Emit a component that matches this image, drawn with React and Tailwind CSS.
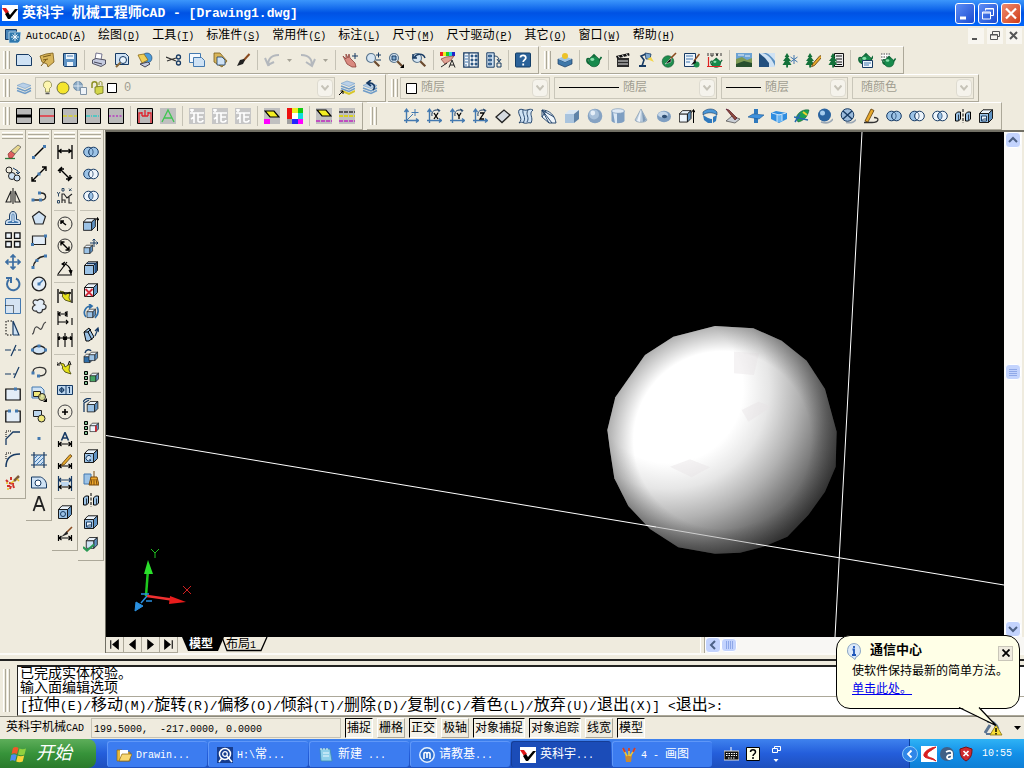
import React, { useState } from 'react';

const NAVY = '#173a63';
const STEEL = '#4379b0';
const PALE = '#cfe2f4';
const INK = '#1a1a1a';

// ---- shared icon shapes ----
const lineSample = (color, dash, width = 1.5) => (
  <>
    <path d="M.5 .5h15v15H.5z" fill="#b9b9b9" stroke="#000" />
    <path d="M1 8h14" stroke={color} strokeWidth={width} strokeDasharray={dash} />
  </>
);

const rings = (left, right, mid) => (
  <>
    <circle cx="5.5" cy="8" r="4.8" fill={left} stroke={NAVY} />
    <circle cx="10.5" cy="8" r="4.8" fill={right} stroke={NAVY} />
    <path d="M8 4a4.8 4.8 0 0 1 0 8a4.8 4.8 0 0 1 0-8z" fill={mid} stroke={NAVY} strokeWidth=".7" />
  </>
);

const cube = (front = PALE, edge = INK) => (
  <>
    <path d="M1.5 5.5h9v9h-9z" fill={front} stroke={edge} />
    <path d="M1.5 5.5L5 1.8h9.5l-4 3.7z" fill="#eaf3fb" stroke={edge} />
    <path d="M10.5 14.5l4-4V1.8l-4 3.7z" fill="#5f93c4" stroke={edge} />
  </>
);

const smallCube = (x, y, front = PALE) => (
  <g transform={`translate(${x} ${y}) scale(.66)`}>{cube(front)}</g>
);

const teapot = (
  <>
    <path d="M12 10l3.500-5M3.500 7C0 5 0 11 4 12" stroke="#0f6a39" strokeWidth="1.700" />
    <ellipse cx="8" cy="9.500" rx="5.600" ry="5.300" fill="#178a4c" stroke="#0b4f2b" strokeWidth=".6" />
    <path d="M5 4.800l3-3 3 3z" fill="#0f6a39" />
    <ellipse cx="6.300" cy="7.500" rx="2" ry="1.400" fill="#8be0ae" />
  </>
);

const tree = (
  <path d="M5 1l2.500 4H6l3 4H7l2.500 4H6v2.500H4.200V13H.5L3 9H1l3-4H2.600z" fill="#14713a" />
);

const ucs = (letter) => (
  <>
    <path d="M3.500 15V2M1 12.500h14M1.500 4l2-2.800 2 2.800M13 10.500l2.500 2-2.500 2" stroke={STEEL} strokeWidth="1.400" />
    {letter === 'X' && <path d="M8 5l4 6M12 5l-4 6" stroke="#000" strokeWidth="1.300" />}
    {letter === 'Y' && <path d="M8 5l2 3 2-3M10 8v3" stroke="#000" strokeWidth="1.300" />}
    {letter === 'Z' && <path d="M8 5h4l-4 6h4" stroke="#000" strokeWidth="1.300" />}
    {letter && <path d="M6 8c-1-5 3-7 7-5.500M11 1l3 1.500-2 2" stroke={NAVY} />}
    {!letter && <path d="M4 12l6-6M12 1v7M8.500 4.500h7" stroke={STEEL} />}
  </>
);

const layers = (
  <>
    <path d="M1 5.500L7 3l8 2.500L9 8.500z" fill="#b9d0e8" stroke="#6f9cc8" strokeWidth=".6" />
    <path d="M1 8l8 3 6-3M1 10.500l8 3 6-3" stroke="#6f9cc8" strokeWidth="1.500" />
  </>
);

const magnifier = (
  <>
    <circle cx="6" cy="6" r="4.500" fill="#d5e5f2" stroke="#5b7790" strokeWidth="1.200" />
    <path d="M9.300 9.300l5 5" stroke="#6b4a2e" strokeWidth="2.200" />
  </>
);

const pencil = <path d="M4.500 10L12 1.500l2 1.500-7.500 8.500-3 1.200z" fill="#e7a92c" stroke="#5c3b0a" strokeWidth=".8" />;
const dimArrow = <path d="M1.500 9v6M14.500 9v6M2 12h12M4.500 10L2 12l2.500 2M11.500 10L14 12l-2.500 2" stroke="#000" strokeWidth="1.200" />;
const bolt = <path d="M3 3l4 1 1 3 5-3-1 6 2 4-6-2-3-4 1-1z" fill="#e6e21a" stroke="#3c3c00" strokeWidth=".8" />;
const textStyle = (
  <>
    <path d="M0 0h16v16H0z" fill="#c6c6c6" />
    <path d="M1 2h4M3 1v3M1 5h14M5 5v10M9 5v8c0 1.500 5 1.500 5-1M9 9h5M2 11l3-2" stroke="#fff" strokeWidth="1.600" />
  </>
);
const swatches = (
  <path d="M1.500 1.500h3v3h-3zM1.500 6.500h3v3h-3zM1.500 11.500h3v3h-3z" fill="#7fbf8f" stroke="#000" />
);

const icons = {
  // standard
  New: <path d="M.5 2.500h12l3 3v8H.5z" fill={PALE} stroke={NAVY} />,
  Open: (
    <>
      <path d="M1 4l6-2 7-1 1 9-6 5-1-3-5-2z" fill="#d9b65b" stroke="#7a5a17" strokeWidth=".8" />
      <path d="M4 5l8-2M4 8l5-1M2 14l5-6" stroke="#7a5a17" />
    </>
  ),
  Save: (
    <>
      <path d="M1.500 1.500h13v13h-12l-1-1z" fill="#5f93c4" stroke={NAVY} />
      <path d="M4 2h8v5H4zM5 10h6v4H5z" fill="#eef5fb" />
      <path d="M5 4h6" stroke={STEEL} />
    </>
  ),
  Plot: (
    <>
      <path d="M5 1l6 1-1 6H4z" fill="#fff" stroke="#557" strokeWidth=".8" />
      <path d="M1.500 8L5 6.500l9.500 1.500v4L10 14.500l-8.500-3z" fill="#c5cbe0" stroke="#445" strokeWidth=".9" />
      <path d="M3 10l8 2" stroke="#445" />
    </>
  ),
  'Plot preview': (
    <>
      <path d="M1.500 1.500h10l3 3v8h-13z" fill={PALE} stroke={NAVY} />
      <circle cx="9" cy="8" r="3.500" fill="#e9f3fb" stroke={NAVY} />
      <path d="M6.500 10.500L2 15" stroke="#8a6a3a" strokeWidth="2" />
    </>
  ),
  Publish: (
    <>
      <circle cx="10" cy="6" r="5" fill="#4d9ddb" stroke={NAVY} strokeWidth=".6" />
      <path d="M1 3l6-1 4 6-6 3z" fill="#f0cf58" stroke="#8a6a17" strokeWidth=".8" />
      <path d="M3 12l8-2 2 2-5 3z" fill="#c5cbe0" stroke="#445" />
    </>
  ),
  Cut: (
    <>
      <path d="M0 5l10 4M1 9l9-3" stroke="#333" strokeWidth="1.300" />
      <circle cx="12.500" cy="5" r="2" stroke={NAVY} strokeWidth="1.300" />
      <circle cx="12.500" cy="11" r="2" stroke={NAVY} strokeWidth="1.300" />
    </>
  ),
  Copy: (
    <>
      <path d="M.5 1.500h11v9H.5z" fill="#f3f8fd" stroke={STEEL} />
      <path d="M4.500 5.500h8l3 3v6h-11z" fill={PALE} stroke={STEEL} />
    </>
  ),
  Paste: (
    <>
      <path d="M2 1h6l7 8-5 6-8-5z" fill="#d9b65b" stroke="#7a5a17" strokeWidth=".8" />
      <path d="M5 5h5l3 3v5H5z" fill={PALE} stroke={NAVY} strokeWidth=".8" />
    </>
  ),
  'Match properties': (
    <>
      <path d="M14.500 2L8 9" stroke="#8a4a1e" strokeWidth="2" />
      <path d="M9 7l-4 1-3 6 6-2 2-4z" fill="#222" />
    </>
  ),
  Undo: <path d="M5 14C3 9 6 3 15 3M1 6l3 7 6-3" stroke="#b4b8bd" strokeWidth="2" />,
  Redo: <path d="M11 14C13 9 10 3 1 3M15 7l-3 7-6-4" stroke="#b4b8bd" strokeWidth="2" />,
  Pan: (
    <>
      <path d="M1 4l3 3V2l2 4 1-4 1 4 5 5 1 4h-4l-5-3z" fill="#d98a80" stroke="#8c4038" strokeWidth=".8" />
      <path d="M13 1v6M10 4h6" stroke={NAVY} />
    </>
  ),
  'Zoom realtime': <>{magnifier}<path d="M11 3h5M13.500 .5v5M11 8h5" stroke={NAVY} /></>,
  'Zoom window': <>{magnifier}<path d="M4 4h4v4H4z" stroke={NAVY} fill="#7fa8cc" /><path d="M16 12v4h-4z" fill="#000" /></>,
  'Zoom previous': <>{magnifier}<path d="M3 6C6 1 12 1 14 6M2 2v4h4" stroke={NAVY} strokeWidth="1.500" /></>,
  Properties: (
    <>
      <path d="M0 0h3v4H0z" fill="#e22" /><path d="M3 0h3v4H3z" fill="#ee2" /><path d="M6 0h3v4H6z" fill="#2c2" />
      <path d="M9 0h3v4H9z" fill="#2cd" /><path d="M12 0h3v4h-3z" fill="#22c" />
      <path d="M1 7l5-2 8-1-3 4-6 4z" fill="#e0a294" stroke="#8c4038" strokeWidth=".7" />
      <path d="M1 15l6-4M9 15.500L12 8l3 7.500M10 13h4" stroke="#222" />
    </>
  ),
  'Design center': (
    <>
      <path d="M.8 .8h14.400v14.400H.8z" fill="#f3f8fd" stroke={NAVY} strokeWidth="1.300" />
      <path d="M6 1v14" stroke={NAVY} />
      <path d="M2 4h3M2 7h3M2 10h3M2 13h2" stroke={STEEL} />
      <path d="M8 3h2v2H8zM12 3h2v2h-2zM8 7h2v2H8zM12 7h2v2h-2zM8 11h2v2H8zM12 11h2v2h-2z" fill={STEEL} stroke={NAVY} strokeWidth=".6" />
    </>
  ),
  'Tool palettes': (
    <>
      <path d="M.8 .8h7.400v14.400H.8z" fill={PALE} stroke={NAVY} />
      <path d="M2.500 3h3v2h-3zM2.500 7h3v2h-3zM2.500 11h3v2h-3z" fill={STEEL} stroke={NAVY} strokeWidth=".6" />
      <path d="M8 4c4 0 5 2 5 5M11 7l2 3 2-3M11 11h4v4h-4z" stroke={NAVY} />
    </>
  ),
  Help: (
    <>
      <rect x=".5" y="1" width="15" height="14" rx="1" fill="#2b6299" stroke="#123d66" />
      <path d="M5.500 5.500C5.500 2.500 11 2.500 10.800 6c0 1.800-2.600 2-2.600 4M8.200 11.500v2" stroke="#fff" strokeWidth="1.800" />
    </>
  ),
  // render
  Hide: (
    <>
      <path d="M1 7l7 3 7-3v5l-7 3-7-3z" fill="#3f77a8" stroke={NAVY} strokeWidth=".7" />
      <path d="M1 7l6-3 8 3-7 3z" fill="#9cc3e6" />
      <circle cx="8" cy="4" r="3" fill="#ecc229" />
    </>
  ),
  Render: teapot,
  Scenes: (
    <>
      <path d="M2 6h12v9H2z" fill="#2b2b2b" />
      <path d="M1 4l13-3 .6 2.500L2 6.500z" fill="#111" />
      <path d="M3 4.500l2 1M7 3.500l2 1M11 2.500l2 1M3 9h10M3 12h10" stroke="#e8e8e8" />
    </>
  ),
  Lights: (
    <>
      <path d="M4 14l2-6-3-4 5-2" stroke={NAVY} strokeWidth="1.600" />
      <path d="M7 1l6 1-1 5H8z" fill="#7ca7cf" stroke={NAVY} strokeWidth=".8" />
      <path d="M9 7l4-2 3 5z" fill="#f3d64a" />
      <path d="M1 14h7" stroke={NAVY} strokeWidth="2" />
    </>
  ),
  Materials: (
    <>
      <circle cx="7" cy="9.500" r="5.800" fill="#1e8e4d" stroke="#0b4f2b" strokeWidth=".6" />
      <path d="M15 1L9 7" stroke="#8a4a1e" strokeWidth="1.600" />
      <path d="M10 6l-6 6 6-2z" fill="#111" stroke="#eee" strokeWidth=".5" />
    </>
  ),
  'Materials library': (
    <>
      <path d="M.5 1.500h11v13H.5z" fill="#eef5fb" stroke={NAVY} />
      <path d="M2 4h7M2 7h7M2 10h4" stroke={STEEL} />
      <circle cx="12.500" cy="12.500" r="3" fill="#1e8e4d" />
      <path d="M15.500 2L10 9" stroke="#8a4a1e" strokeWidth="1.500" />
      <path d="M11 8l-4 5 5-2z" fill="#111" />
    </>
  ),
  Mapping: (
    <>
      <g transform="translate(3 4) scale(.78)">{teapot}</g>
      <path d="M1.500 15V5M0 14.500h15" stroke="#d22" strokeWidth="1.200" />
      <path d="M1 1v3M4 1v3h2V1M9 1l1 3 1-3M14 1v3" stroke="#222" strokeWidth=".9" />
    </>
  ),
  Background: (
    <>
      <path d="M0 1h16v7H0z" fill="#6da3d4" />
      <path d="M0 7l6-2 5 3 5-2v9H0z" fill="#7d9a55" />
      <path d="M0 12l8-3 8 2v4H0z" fill="#284f2e" />
      <path d="M2 3h6M9 4h5" stroke="#e8f0f8" />
    </>
  ),
  Fog: (
    <>
      <path d="M0 1h16v14H0z" fill="#cfe2f4" />
      <path d="M0 1l6 5 4 5v4H0z" fill="#23507f" />
      <path d="M3 1c6 1 10 6 13 13V9C13 5 10 2 7 1z" fill="#5a8fc0" />
    </>
  ),
  'New landscape': <>{tree}<path d="M12 3v9M8.500 5l7 5M15.500 5l-7 5" stroke={STEEL} /></>,
  'Edit landscape': <>{tree}<g transform="translate(3 2)">{pencil}</g></>,
  'Landscape library': (
    <>
      <path d="M6.500 1.500h9v13h-9z" fill="#eee" stroke="#111" />
      <path d="M8 4h6M8 7h6M8 10h6M8 12.500h6" stroke="#111" />
      {tree}
    </>
  ),
  'Render preferences': (
    <>
      <g transform="translate(1 -1)">{teapot}</g>
      <path d="M5.500 8.500h10v7h-10z" fill="#eef5fb" stroke={NAVY} />
      <path d="M7 11h7M7 13h5" stroke={STEEL} />
    </>
  ),
  Statistics: (
    <>
      <path d="M1 1.500h9v8H1z" fill="#fff" />
      <path d="M1 2h9M1 5h9M1 8h9" stroke="#444" strokeDasharray="1.500 1" />
      <g transform="translate(2 2) scale(.88)">{teapot}</g>
    </>
  ),
  // layers
  'Layer manager': layers,
  'Make object layer current': (
    <>
      <g transform="translate(1 -2)">{layers}</g>
      <path d="M3 11l7 3 6-3" stroke="#d8c62a" strokeWidth="2" />
      <path d="M0 15l4-4M1.500 11H4v3" stroke="#000" />
    </>
  ),
  'Layer previous': <>{layers}<path d="M11 10c3-3 1-8-5-7M9 0L5 3l4 3" stroke={NAVY} strokeWidth="1.600" /></>,
  // line types
  'Bold line': lineSample('#000', undefined, 3),
  'Thin line': lineSample('#e8303c'),
  'Hidden line': lineSample('#d6cf2e', '4 1.5'),
  'Centre line': lineSample('#35c9c5', '4 1 1 1'),
  'Phantom line': lineSample('#b83cc0', '2 1.5'),
  'Surface mark': (
    <>
      <path d="M.5 .5h15v15H.5z" fill="#b9b9b9" stroke="#000" />
      <path d="M2 15V5h3v3V4M8 8V2M11 8V4v1h3v10M5 8h6" stroke="#e0202a" strokeWidth="1.300" />
    </>
  ),
  'Text tool': <><path d="M0 0h16v16H0z" fill="#c0c0c0" /><path d="M2 14L8 2l6 12M4 10h8" stroke="#3fc552" strokeWidth="1.300" /></>,
  'Text style 1': textStyle,
  'Text style 2': textStyle,
  'Text style 3': textStyle,
  'Fill colour': (
    <>
      <path d="M0 0h16v16H0z" fill="#c0c0c0" />
      <path d="M1 3h9l5 6H6z" fill="#f2ee22" stroke="#000" strokeWidth="1.200" />
      <path d="M0 11h6v5H0z" fill="#f0f" />
    </>
  ),
  Palette: (
    <>
      <path d="M0 0h5v5H0z" fill="#e11" /><path d="M5 0h6v5H5z" fill="#ee2" /><path d="M11 0h5v5h-5z" fill="#1c1" />
      <path d="M0 5h5v6H0z" fill="#e11" /><path d="M5 5h6v6H5z" fill="#fff" /><path d="M11 5h5v6h-5z" fill="#1dd" />
      <path d="M0 11h5v5H0z" fill="#a0a0a0" /><path d="M5 11h6v5H5z" fill="#22f" /><path d="M11 11h5v5h-5z" fill="#f0f" />
    </>
  ),
  'Fill line': (
    <>
      <path d="M0 0h16v16H0z" fill="#c0c0c0" />
      <path d="M1 2h9l5 6H6z" fill="#f2ee22" stroke="#000" strokeWidth="1.200" />
      <path d="M0 13h16" stroke="#c02ac0" strokeWidth="1.500" strokeDasharray="4 1" />
    </>
  ),
  'Line list': (
    <>
      <path d="M0 0h16v16H0z" fill="#c0c0c0" />
      <path d="M0 4h16" stroke="#333" strokeWidth="1.500" strokeDasharray="4 1" />
      <path d="M0 8h16" stroke="#d8d022" strokeWidth="2" strokeDasharray="4 1" />
      <path d="M0 13h16" stroke="#c02ac0" strokeWidth="1.500" strokeDasharray="4 1" />
    </>
  ),
  // ucs and solids
  'UCS origin': ucs(),
  'UCS X': ucs('X'),
  'UCS Y': ucs('Y'),
  'UCS Z': ucs('Z'),
  '3D face': <path d="M1 9l8-7 6 5-8 7.500z" fill="#d6dbe0" stroke="#222" strokeWidth="1.300" />,
  'Ruled surface': <path d="M1 2c3-2 5 1 8 0s4-1 6 0c-5 4 1 7-2 13-3-1-5 1-7 0s-3-1-5 0C6 10-1 7 1 2zM5 2c-1 5 4 7 0 13M10 2c-3 5 2 7-1 12" fill={PALE} stroke={NAVY} strokeWidth=".9" />,
  'Edge surface': <path d="M1 2c8 0 13 6 14 13H8L1 9zM1 2l7 13M1 2l10 13M1 2l12 7M1 9L5 3" fill="#eef5fb" stroke={NAVY} strokeWidth=".9" />,
  Box: (
    <>
      <path d="M1 6h9v9H1z" fill="#a9c4de" /><path d="M1 6l4-4h10l-5 4z" fill="#dbe8f4" /><path d="M10 15l5-4V2l-5 4z" fill="#5f83a8" />
    </>
  ),
  Sphere: <><circle cx="8" cy="8" r="7.300" fill="#86a3c3" /><circle cx="7" cy="6.500" r="5" fill="#a9c1da" /><circle cx="5.800" cy="5" r="2.400" fill="#e6eff8" /></>,
  Cylinder: (
    <>
      <path d="M1.500 3v10c2 3 11 3 13 0V3z" fill="#7f9fc2" /><path d="M3 4h4v11H5z" fill="#dbe8f4" />
      <ellipse cx="8" cy="3" rx="6.500" ry="2.300" fill="#dfeaf5" stroke="#6f8fb1" strokeWidth=".6" />
    </>
  ),
  Cone: <><path d="M8 1l6 11c-1 3-11 3-12 0z" fill="#b9cbdc" stroke="#7a92aa" strokeWidth=".6" /><path d="M8 1l-1 13-3-1z" fill="#eef4fa" /><path d="M9 3l4 9-3 2z" fill="#7f9ab6" /></>,
  Torus: <><ellipse cx="8" cy="8.500" rx="7" ry="5.800" fill="#7f9fc2" /><ellipse cx="7" cy="6.500" rx="5" ry="3" fill="#c5d7e9" /><ellipse cx="8.500" cy="8.500" rx="2.600" ry="1.800" fill="#2f4f73" /></>,
  Extrude: <><g transform="translate(-1 1) scale(.9)">{cube('#eef5fb')}</g><path d="M14.500 15V2M12.500 4.500l2-3 1.500 3" stroke="#000" /></>,
  Revolve: <><path d="M1 4c4-4 11-4 14 0v3c-4-3-10-3-14 0z" fill="#4a97d8" stroke={NAVY} strokeWidth=".6" /><path d="M1 7l5 3v5l-4-3zM6 10l4 1v4H6zM11 9l4-2-1 6-3 2z" fill="#2f79bd" /><circle cx="9" cy="9" r="1.800" fill="#e8f2fb" /></>,
  Slice: <><path d="M1 13l6-5 8 3-5 4z" fill="#c9ced4" stroke="#444" strokeWidth=".7" /><path d="M1 1l3 1 8 8-2 2z" fill="#8a4a3a" stroke="#402" strokeWidth=".6" /></>,
  Section: <><path d="M6 1h4v5H6zM6 10h4v5H6z" fill="#2f79bd" /><path d="M0 9l5-3 11 1-5 4z" fill="#3f92de" stroke="#1a5590" strokeWidth=".6" /></>,
  Interfere: <><path d="M0 5l5-2 11 2v6l-8 4-8-4z" fill="#2f8de0" /><path d="M6 6h5v8H6z" fill="#67b4f2" /><path d="M1 5l7 2 7-2M6 7v7M11 7v6" stroke="#cfe6fa" /></>,
  'Setup view': <><path d="M2 10c2-7 9-9 13-8-1 6-5 11-11 12z" fill="#1fa052" stroke="#0b4f2b" strokeWidth=".5" /><path d="M0 9l14 3M1 14l5-8" stroke="#2468b0" strokeWidth="1.500" /><path d="M9 4l4 3" stroke="#f2d22e" strokeWidth="2" /></>,
  'Shaded view': <><path d="M4 14c6 2 10 0 12-3" stroke="#9aa7b4" strokeWidth="1.500" /><circle cx="7.500" cy="7" r="6.500" fill="#2a63a0" /><circle cx="5.500" cy="5" r="2.500" fill="#a5cbed" /></>,
  'Mesh view': <><path d="M6 14.500c5 1 8 0 10-3" stroke="#9aa7b4" strokeWidth="1.500" /><circle cx="7.500" cy="7" r="6.300" fill="#9bbbdc" stroke={NAVY} /><path d="M3 3l9 8M12 3l-9 8" stroke={NAVY} strokeWidth="1.400" /></>,
  Sketch: <><path d="M1 14.500h8c7 0 8-5 2-5" stroke="#333" strokeWidth="1.300" /><path d="M2 13L8 1l3 1.500L5 14z" fill="#e7a92c" stroke="#5c3b0a" strokeWidth=".8" /></>,
  Union: rings('#9cc3e6', '#9cc3e6', '#9cc3e6'),
  Subtract: rings('#9cc3e6', '#eef5fb', '#eef5fb'),
  Intersect: rings('#eef5fb', '#eef5fb', '#9cc3e6'),
  Separate: (
    <>
      <path d="M.5 6l2-2h3v7l-2 2h-3zM10.500 6l2-2h3v7l-2 2h-3z" fill="#9cc3e6" stroke="#000" />
      <path d="M3.500 6.500v6M13.500 6.500v6" stroke="#000" strokeWidth=".7" />
      <path d="M8 1v14" stroke="#000" strokeDasharray="3 1.500" />
    </>
  ),
  Shell: <>{cube('#9cc3e6')}<path d="M3.500 8h5v5h-5z" fill="#eef5fb" stroke={NAVY} /><path d="M3.500 13l2-2h3" stroke={NAVY} /></>,
  // modify
  Erase: <><path d="M0 14.500h10" stroke="#2b7a3a" strokeWidth="1.300" /><path d="M3 10l3-3 4 3-3 4H4z" fill="#e06060" stroke="#7a2222" strokeWidth=".6" /><path d="M6 7l7-6 3 2-6 7z" fill="#e8d890" stroke="#555" strokeWidth=".7" /></>,
  'Copy object': <><circle cx="4" cy="4" r="3" stroke="#222" /><circle cx="7" cy="10" r="3.500" fill={PALE} stroke="#222" /><circle cx="12" cy="12" r="3" fill={PALE} stroke="#222" /><path d="M8 2l5 3v3M11 6l2 2 2-2" stroke={NAVY} /></>,
  Mirror: <path d="M6 3v11H1zM10 3v11h5zM8 0v16" stroke="#222" strokeWidth="1.100" />,
  Offset: <><path d="M.5 14.500h15v-2c0-3-3-3-4-3V6c0-6-7-6-7 0v3.500c-1 0-4 0-4 3z" fill={PALE} stroke={NAVY} /><path d="M3 12.500h10c0-1-3-1-4-1V6c0-3-2-3-2 0v5.500c-1 0-4 0-4 1z" fill="#fff" stroke={STEEL} /></>,
  Array: <path d="M.8 .8h5.500v5.500H.8zM9.500 .8H15v5.500H9.500zM.8 9.500h5.500V15H.8zM9.500 9.500H15V15H9.500z" fill="#eef5fb" stroke="#111" strokeWidth="1.300" />,
  Move: <path d="M8 1v14M1 8h14M5.500 3.500L8 1l2.500 2.500M5.500 12.500L8 15l2.500-2.500M3.500 5.500L1 8l2.500 2.500M12.500 5.500L15 8l-2.500 2.500" stroke="#3c6ea3" strokeWidth="1.700" />,
  Rotate: <path d="M4 3.500a6.200 6.200 0 1 0 7-1M1 2l5 0v5" stroke="#3c6ea3" strokeWidth="2" />,
  Scale: <><path d="M.5 .5h15v15H.5z" fill="#d5e3f2" stroke={STEEL} /><path d="M.5 7.500h8v8" stroke="#000" strokeDasharray="1 1" /></>,
  Stretch: <><path d="M8 1v14M8 1l6 14H8" fill={PALE} stroke={NAVY} strokeWidth="1.200" /><path d="M7 1H1v14h6" stroke="#000" strokeDasharray="1.5 1.5" /></>,
  Trim: <path d="M0 8h6M11 3L6 14M9 8h2M13 8h3" stroke={NAVY} strokeWidth="1.200" />,
  Extend: <path d="M0 10h6M8 10h3M14 3L9 14" stroke={NAVY} strokeWidth="1.200" />,
  'Break at point': <><path d="M.8 3h14.400v11H.8z" fill="#e3edf7" stroke="#000" strokeWidth="1.200" /><path d="M9 1.500h3v3H9z" fill={STEEL} /></>,
  Break: <><path d="M4 3H.8v11h14.400V3H12" fill="#e3edf7" stroke="#000" strokeWidth="1.200" /><path d="M3 1.500h3v3H3zM10 1.500h3v3h-3z" fill={STEEL} /></>,
  Chamfer: <><path d="M1 15V9l7-7h7" stroke={NAVY} strokeWidth="1.300" /><path d="M1 7V1h6" stroke="#000" strokeDasharray="1 1" /></>,
  Fillet: <><path d="M1 15C1 6 6 2 15 2" stroke={NAVY} strokeWidth="1.500" /><path d="M1 7V1h6" stroke="#000" strokeDasharray="1 1" /></>,
  Explode: <><path d="M9 7l5-5" stroke="#7a5a3a" strokeWidth="2.500" /><path d="M1 6l2 2M6 3v3M2 12h3M5 15l1-3M9 14l-1-3M4 9l5 1" stroke="#d0302a" strokeWidth="2" /><path d="M6 9l3-2M2 15h2M12 5l2 2M1 9h2" stroke="#e8c020" strokeWidth="1.500" /></>,
  // draw
  Line: <><path d="M3 13L13 3" stroke="#000" strokeWidth="1.400" /><path d="M1 12h3v3H1zM12 1h3v3h-3z" fill={STEEL} /></>,
  'Construction line': <><path d="M1 15L15 1M1 11v4h4M11 1h4v4" stroke="#000" strokeWidth="1.400" /><path d="M6.500 6.500h3v3h-3z" fill={STEEL} /></>,
  Polyline: <><path d="M2 12h9c5 0 5-7-1-7" stroke="#222" strokeWidth="1.300" /><path d="M.5 10.500h3v3h-3zM8 10.500h3v3H8zM7 3.500h3v3H7z" fill={STEEL} /></>,
  Polygon: <path d="M8 1.500l6.500 5-2.500 7.500H4L1.500 6.500z" fill={PALE} stroke="#222" strokeWidth="1.200" />,
  Rectangle: <><path d="M1.500 4h13v8.500h-13z" fill="#e3edf7" stroke="#222" strokeWidth="1.200" /><path d="M0 11h3v3H0zM13 2.500h3v3h-3z" fill={STEEL} /></>,
  Arc: <><path d="M2 14C3 7 7 3 14 2" stroke="#222" strokeWidth="1.300" /><path d="M.5 12h3v3h-3zM4.500 5h3v3h-3zM13 .5h3v3h-3z" fill={STEEL} /></>,
  Circle: <><circle cx="8" cy="8" r="6.800" fill="#e3edf7" stroke="#222" strokeWidth="1.300" /><path d="M8 8l4-4" stroke={STEEL} strokeWidth="1.500" /><path d="M6.500 6.500h3v3h-3z" fill={STEEL} /></>,
  'Revision cloud': <path d="M4 7C0 5 3 0 6.500 2.500 9-.5 15 2 12.500 6c4 1 3 6-1 5.500 0 4-5 4.500-6 1.500-4 1-6-4-1.500-6z" fill="#e3edf7" stroke="#333" strokeWidth="1.200" />,
  Spline: <path d="M1 14C4 14 2 8 5 7s4 5 6 1 1-5 4-6" stroke="#444" strokeWidth="1.200" />,
  Ellipse: <><ellipse cx="8" cy="8" rx="6.300" ry="4" fill={PALE} stroke="#222" strokeWidth="1.300" /><path d="M0 6.500h3v3H0zM13 6.500h3v3h-3zM6.500 2.500h3v3h-3z" fill={STEEL} /></>,
  'Ellipse arc': <><path d="M2 8C2 2 15 2 15 7c0 4-4 5-7 5" stroke="#333" strokeWidth="1.300" /><path d="M.5 7.500h3v3h-3zM6 10.500h3v3H6z" fill={STEEL} /></>,
  'Insert block': <><path d="M1 1h9l3 3v8H1z" fill={PALE} stroke={STEEL} /><path d="M2.500 5.500h7v5h-7z" fill="#f0e87a" stroke="#222" /><circle cx="11" cy="11" r="3.500" fill="#f0e87a" fillOpacity=".7" stroke="#222" /><path d="M16 12v4h-4z" fill="#000" /></>,
  'Make block': <><path d="M2.500 2.500h8v6h-8z" fill="#bcd6ee" stroke="#222" /><circle cx="10.500" cy="10.500" r="3.500" fill="#f0e87a" stroke="#222" /></>,
  Point: <path d="M6.500 7h3v3h-3z" fill={STEEL} />,
  Hatch: <><path d="M3 3h10v10H3z" fill={PALE} /><path d="M3 0v16M13 0v16M0 3h16M0 13h16" stroke={NAVY} strokeWidth="1.200" /><path d="M3 7l4-4M3 11l8-8M5 13l8-8M9 13l4-4" stroke={STEEL} /></>,
  Region: <><path d="M.5 3h9c3 1 6 4 6 8v3H.5z" fill={PALE} stroke={NAVY} /><circle cx="7" cy="9" r="3" fill="#fff" stroke={NAVY} /></>,
  'Multiline text': <path d="M2.500 15L7.500 1h1l5 14M4.500 10h7" stroke="#222" strokeWidth="1.800" />,
  // dimension
  'Linear dimension': <path d="M1 1v14M15 1v14M1.500 7h13M4.500 5L2 7l2.500 2M11.500 5L14 7l-2.500 2" stroke="#000" strokeWidth="1.300" />,
  'Aligned dimension': <path d="M1 5l4-4M11 15l4-4M3 3l10 10M3 7V3h4M13 9v4H9" stroke="#000" strokeWidth="1.400" />,
  'Ordinate dimension': <><path d="M5 15V6h2l3 4 5-4M5 12h3v3M12 8v7h3" stroke="#222" strokeWidth="1.100" /><path d="M0 4l1.500 2L3 4M1.500 6v2.500M.5 12.500h2v2.500h-2zM5 .5h2V3H5zM12 .5L14.500 3M14.500 .5L12 3" stroke="#2d4863" /></>,
  'Radius dimension': <><circle cx="8" cy="8" r="7" stroke="#333" /><path d="M9 9L4 5M4 8V5h3" stroke="#000" strokeWidth="1.500" /></>,
  'Diameter dimension': <><circle cx="8" cy="8" r="7" stroke="#333" /><path d="M4 4l8 8M4 7.500V4h3.500M12 8.500V12H8.500" stroke="#000" strokeWidth="1.400" /></>,
  'Angular dimension': <path d="M0 15h15M1 14L10 2M5 4c4-1 9 3 9 9M8 2L5 4l3 2M12 10l2 4 1-4" stroke="#000" strokeWidth="1.100" />,
  'Quick dimension': <>{bolt}<path d="M1 1v14M15 1v14M2 5h12" stroke="#000" strokeWidth="1.300" /></>,
  'Baseline dimension': <path d="M1 1v14M10 1v6M15 8v7M1 4h9M1 12h10M3.500 2L1 4l2.500 2M8 2l2 2-2 2M9 10l2 2-2 2" stroke="#000" strokeWidth="1.100" />,
  'Continue dimension': <path d="M1 1v14M8 1v14M15 1v14M1 6h14M3 4.500L1 6l2 1.500M6 4.500L8 6 6 7.500M10 4.500L8 6l2 1.500M13 4.500L15 6l-2 1.500" stroke="#000" strokeWidth="1.100" />,
  'Quick leader': <>{bolt}<path d="M0 5l4-3M0 5h3M0 5V2M11 5l1.500-4L14 5" stroke="#111" /></>,
  Tolerance: <><path d="M.5 3.500h15v9H.5zM9 3.500v9" fill="#bcd6ee" stroke={NAVY} /><circle cx="4.700" cy="8" r="2" stroke={NAVY} /><path d="M2 8h5.500M4.700 5v6M12.500 5v6M11 6l1.500-1" stroke={NAVY} /></>,
  'Centre mark': <><circle cx="8" cy="8" r="7" stroke="#444" /><path d="M8 5v6M5 8h6" stroke="#000" strokeWidth="1.600" /></>,
  'Dimension text edit': <>{dimArrow}<path d="M4.500 8.500L8 .5l3.500 8M6 6h4" stroke={NAVY} strokeWidth="1.600" /></>,
  'Dimension edit': <>{dimArrow}<g transform="translate(1 -1)">{pencil}</g></>,
  'Dimension update': <><path d="M1.500 0v15M14.500 0v15M2 4h12M4 2L2 4l2 2M12 2l2 2-2 2" stroke={NAVY} strokeWidth="1.200" /><path d="M4 6h8v4H4z" fill="#bcd6ee" /><path d="M2 11h12M4.500 9L2 11l2.500 2M11.500 9l2.500 2-2.500 2" stroke="#000" strokeWidth="1.200" /></>,
  'Dimension style': <>{cube('#9cc3e6')}<circle cx="6" cy="10" r="2.500" stroke={NAVY} /></>,
  'Dimension brush': <>{dimArrow}<path d="M15 1l-6 6" stroke="#8a4a1e" strokeWidth="1.600" /><path d="M10 5l-6 6 7-3z" fill="#222" /></>,
  // solids editing
  'Extrude faces': <><g transform="translate(-1 1) scale(.92)">{cube('#9cc3e6')}</g><path d="M14.500 15V2M12.500 4.500l2-3 1.500 3" stroke="#000" /></>,
  'Move faces': <>{smallCube(0, 6, '#9cc3e6')}<path d="M11 1v8M7 5h8M9.500 2.500L11 1l1.500 1.500M13.500 3.500L15 5l-1.500 1.500" stroke={NAVY} /></>,
  'Offset faces': <>{cube('#9cc3e6')}<path d="M4 3.500h9v9" stroke={NAVY} strokeWidth="1.500" /></>,
  'Delete faces': <>{cube('#eef5fb')}<path d="M2.500 7l7 7M9.500 7l-7 7" stroke="#d02a3a" strokeWidth="1.800" /></>,
  'Rotate faces': <>{smallCube(3, 4, '#9cc3e6')}<path d="M3 13C-1 8 3 2 8 2M6 0l3 2-3 2.500M14 3c2 4 1 8-2 11" stroke="#2f6ea8" strokeWidth="1.700" /></>,
  'Taper faces': <><path d="M1 6l5-4 5 9-5 4H3z" fill="#9cc3e6" stroke="#000" /><path d="M1 6h4l4 8M5 6l3-3" stroke="#000" /><path d="M12 10l3-7M12 5l3-3 1 4" stroke={NAVY} strokeWidth="1.200" /></>,
  'Copy faces': <>{smallCube(0, 5, '#2f6ea8')}{smallCube(5, 3, '#9cc3e6')}<path d="M2 5C3 1 7 1 8 3" stroke={NAVY} strokeWidth="1.500" /></>,
  'Colour faces': <>{swatches}{smallCube(6, 2, '#45a562')}</>,
  'Copy edges': <><g transform="translate(3 2) scale(.82)">{cube('#9cc3e6')}</g><path d="M1 14V5l5-3M0 4C2 0 6 0 8 1" stroke={NAVY} strokeWidth="1.300" /></>,
  'Colour edges': <>{swatches}{smallCube(6, 2, '#eef5fb')}<path d="M13 11.500V5.700" stroke="#e0202a" strokeWidth="1.600" /></>,
  Imprint: <>{cube('#9cc3e6')}<path d="M8 8.500a2.800 2.800 0 1 0 0 3.500H6" fill={PALE} stroke={NAVY} /></>,
  Clean: <><path d="M1 4h7v10H1z" fill="#9cc3e6" stroke={STEEL} /><path d="M11 1v6M8 7h6l2 8H6z" fill="#eea82c" stroke="#7a4a0a" /><path d="M9 9l-1 6M11 9v6M13 9l1 6" stroke="#7a4a0a" /></>,
  Check: <><g transform="translate(2 0) scale(.85)">{cube()}</g><path d="M0 11l4 3.500 7-6" stroke="#2b9a55" strokeWidth="2.200" /></>,
};

const rowOneMain = [
  'New', 'Open', 'Save', '|', 'Plot', 'Plot preview', 'Publish', '|', 'Cut', 'Copy', 'Paste', 'Match properties', '|',
  'Undo', 'v', 'Redo', 'v', '|', 'Pan', 'Zoom realtime', 'Zoom window', 'Zoom previous', '|',
  'Properties', 'Design center', 'Tool palettes', '|', 'Help',
];
const rowOneRender = [
  'Hide', '|', 'Render', '|', 'Scenes', 'Lights', 'Materials', 'Materials library', 'Mapping', '|',
  'Background', 'Fog', 'New landscape', 'Edit landscape', 'Landscape library', '|', 'Render preferences', 'Statistics',
];
const rowThreeLines = [
  'Bold line', 'Thin line', 'Hidden line', 'Centre line', 'Phantom line', '|', 'Surface mark', 'Text tool', '|',
  'Text style 1', 'Text style 2', 'Text style 3', '|', 'Fill colour', 'Palette', '|', 'Fill line', 'Line list',
];
const rowThreeSolids = [
  'UCS origin', 'UCS X', 'UCS Y', 'UCS Z', '3D face', 'Ruled surface', 'Edge surface', 'Box', 'Sphere', 'Cylinder', 'Cone',
  'Torus', 'Extrude', 'Revolve', 'Slice', 'Section', 'Interfere', 'Setup view', 'Shaded view', 'Mesh view', 'Sketch',
  'Union', 'Subtract', 'Intersect', 'Separate', 'Shell',
];
const sideBars = [
  ['Erase', 'Copy object', 'Mirror', 'Offset', 'Array', 'Move', 'Rotate', 'Scale', 'Stretch', 'Trim', 'Extend',
    'Break at point', 'Break', 'Chamfer', 'Fillet', 'Explode'],
  ['Line', 'Construction line', 'Polyline', 'Polygon', 'Rectangle', 'Arc', 'Circle', 'Revision cloud', 'Spline', 'Ellipse',
    'Ellipse arc', 'Insert block', 'Make block', 'Point', 'Hatch', 'Region', 'Multiline text'],
  ['Linear dimension', 'Aligned dimension', 'Ordinate dimension', '|', 'Radius dimension', 'Diameter dimension',
    'Angular dimension', '|', 'Quick dimension', 'Baseline dimension', 'Continue dimension', '|', 'Quick leader',
    'Tolerance', 'Centre mark', '|', 'Dimension text edit', 'Dimension edit', 'Dimension update', '|',
    'Dimension style', 'Dimension brush'],
  ['Union', 'Subtract', 'Intersect', '|', 'Extrude faces', 'Move faces', 'Offset faces', 'Delete faces', 'Rotate faces',
    'Taper faces', 'Copy faces', 'Colour faces', '|', 'Copy edges', 'Colour edges', '|', 'Imprint', 'Clean',
    'Separate', 'Shell', 'Check'],
];

const menus = [
  ['AutoCAD', 'A'], ['绘图', 'D'], ['工具', 'T'], ['标准件', 'S'], ['常用件', 'C'], ['标注', 'L'],
  ['尺寸', 'M'], ['尺寸驱动', 'P'], ['其它', 'O'], ['窗口', 'W'], ['帮助', 'H'],
];

const toggles = [
  ['捕捉', true], ['栅格', false], ['正交', true], ['极轴', false],
  ['对象捕捉', true], ['对象追踪', true], ['线宽', false], ['模型', true],
];

// Latin runs are set smaller so that two of them take the width of one Chinese character
const Mixed = ({ text, latin = 'text-[10px]' }) => (
  <span className="whitespace-pre">
    {text.split(/([\x20-\x7e]+)/).map((part, i) =>
      i % 2 ? <span key={i} className={latin}>{part}</span> : part
    )}
  </span>
);

const Icon = ({ name }) => (
  <svg viewBox="0 0 16 16" className="w-4 h-4" fill="none" aria-hidden="true">{icons[name]}</svg>
);

const Grip = () => (
  <div className="flex gap-px w-3 h-full py-1 pl-[3px] shrink-0">
    <div className="w-[3px] border-l border-white border-r border-r-[#aca899]" />
    <div className="w-[3px] border-l border-white border-r border-r-[#aca899]" />
  </div>
);

const Tools = ({ items }) =>
  items.map((name, i) => {
    if (name === '|') {
      return <div key={i} className="w-1.5 h-5 flex justify-center shrink-0"><div className="w-px bg-[#c5c2b5]" /></div>;
    }
    if (name === 'v') {
      return (
        <button key={i} aria-label={`${items[i - 1]} list`} className="w-[13px] flex justify-center shrink-0">
          <svg viewBox="0 0 5 3" className="w-[5px] h-[3px]"><path d="M0 0h5L2.500 3z" fill="#a5a296" /></svg>
        </button>
      );
    }
    return (
      <button key={i} aria-label={name} className="w-[23px] h-6 flex items-center justify-center shrink-0">
        <Icon name={name} />
      </button>
    );
  });

const Bar = ({ children }) => (
  <div className="flex items-center h-7 pr-1 border-t border-t-white border-b border-b-[#aca899] border-r border-r-[#aca899] shrink-0">
    <Grip />
    {children}
  </div>
);

const Combo = ({ label, value, width, children }) => (
  <div className={`flex items-center h-[22px] border border-[#c9c6b9] bg-[#efebde] pl-1 shrink-0 ${width}`}>
    {children}
    <select
      aria-label={label}
      className="appearance-none flex-1 min-w-0 h-5 pl-1 text-[12px] leading-5 text-[#a19e91] bg-transparent outline-none"
    >
      <option>{value}</option>
    </select>
    <span className="w-4 h-[18px] mr-px flex items-center justify-center bg-[#f5f3ec] border border-[#dedbd0] rounded-sm pointer-events-none">
      <svg viewBox="0 0 8 6" className="w-2 h-1.5" fill="none"><path d="M.5 .5L4 4.500 7.500 .5" stroke="#c6c3b8" strokeWidth="2" /></svg>
    </span>
  </div>
);

const SideBar = ({ items }) => (
  <div className="w-[26px] pb-[5px] border-r border-r-[#aca899] border-b border-b-[#aca899]">
    <div className="h-[11px] px-0.5 pt-0.5 flex flex-col gap-px">
      <div className="h-[3px] border-t border-white border-b border-b-[#aca899]" />
      <div className="h-[3px] border-t border-white border-b border-b-[#aca899]" />
    </div>
    {items.map((name, i) =>
      name === '|' ? (
        <div key={i} className="h-1.5 px-0.5 flex items-center"><div className="h-px w-full bg-[#c5c2b5]" /></div>
      ) : (
        <button key={i} aria-label={name} className="w-full h-[22px] flex items-center justify-center">
          <Icon name={name} />
        </button>
      )
    )}
  </div>
);

const ScrollButton = ({ label, d }) => (
  <button aria-label={label} className="w-4 h-4 flex items-center justify-center rounded-sm border border-white bg-[#c3d3fd] shrink-0">
    <svg viewBox="0 0 10 10" className="w-2.5 h-2.5" fill="none"><path d={d} stroke="#4d6185" strokeWidth="2" /></svg>
  </button>
);

const Logo = () => (
  <svg viewBox="0 0 16 16" className="w-4 h-4 shrink-0">
    <path d="M0 0h16v16H0z" fill="#fff" />
    <path d="M0 3h4l3 4-3 2z" fill="#e01818" />
    <path d="M3 9l3-2 2 3 5-6h3l-8 10H6z" fill="#000" />
  </svg>
);

const TitleBar = () => (
  <header className="flex items-center h-[26px] pl-0.5 pr-[3px] shrink-0 bg-gradient-to-b from-[#3c96fb] via-[#0052e4] to-[#0166fb]">
    <Logo />
    <h1 className="ml-1 text-[14px] leading-[22px] font-bold text-white">
      <Mixed text="英科宇 机械工程师CAD - [Drawing1.dwg]" latin="text-[13px]" />
    </h1>
    <div className="ml-auto flex gap-[3px]">
      <button aria-label="Minimize" className="w-5 h-[21px] rounded-[3px] border border-white bg-gradient-to-br from-[#5e8df5] to-[#1b49d0]">
        <svg viewBox="0 0 18 18" className="w-full h-full"><path d="M4 12h6v3H4z" fill="#fff" /></svg>
      </button>
      <button aria-label="Restore" className="w-5 h-[21px] rounded-[3px] border border-white bg-gradient-to-br from-[#5e8df5] to-[#1b49d0]">
        <svg viewBox="0 0 18 18" className="w-full h-full" fill="none" stroke="#fff"><path d="M6.500 6V4h8v7h-3M6.500 4.500h8M3.500 7.500h8v7h-8zM3.500 8.500h8" /></svg>
      </button>
      <button aria-label="Close" className="w-5 h-[21px] rounded-[3px] border border-white bg-gradient-to-br from-[#ef8a6c] to-[#cf3a12]">
        <svg viewBox="0 0 18 18" className="w-full h-full"><path d="M4 4l10 10M14 4L4 14" stroke="#fff" strokeWidth="2.200" /></svg>
      </button>
    </div>
  </header>
);

const MenuBar = () => (
  <nav className="flex items-center h-5 pl-[5px] pr-0.5 shrink-0 text-[12px] leading-[18px]">
    <svg viewBox="0 0 16 16" className="w-4 h-4" fill="none">
      <path d="M.5 1.500h11v10H.5z" fill="#4b86b8" stroke={NAVY} />
      <path d="M4 4h12l-1 9-2 2H4z" fill="#2f78ad" stroke="#dcecf8" strokeWidth=".7" />
      <path d="M10 5v8M6 9h8M7.500 6.500l5 5M12.500 6.500l-5 5" stroke="#fff" strokeWidth=".9" />
    </svg>
    <ul className="flex gap-3 ml-[5px]">
      {menus.map(([name, key]) => (
        <li key={name}>
          <button className="whitespace-nowrap">
            <Mixed text={name} />
            <span className="text-[10px]">(<u>{key}</u>)</span>
          </button>
        </li>
      ))}
    </ul>
    <div className="ml-auto flex gap-[3px]">
      {[
        ['Minimize drawing', 'M4 11h5', 2],
        ['Restore drawing', 'M5.500 6V3.500h7v5h-2.500M3.500 6.500h7v5h-7zM3.500 7h7', 1],
        ['Close drawing', 'M4 4l7 7M11 4l-7 7', 2],
      ].map(([label, d, w]) => (
        <button key={label} aria-label={label} className="w-4 h-4 bg-[#f8f6f0]">
          <svg viewBox="0 0 16 16" className="w-4 h-4" fill="none"><path d={d} stroke="#555" strokeWidth={w} /></svg>
        </button>
      ))}
    </div>
  </nav>
);

const LayerFlags = () => (
  <svg viewBox="0 0 80 16" className="w-20 h-4 shrink-0" fill="none">
    <path d="M7 1a4 4 0 0 1 2.500 7.500V12h-4V8.500A4 4 0 0 1 7 1z" fill="#fdf6b0" stroke="#8a8a50" strokeWidth=".8" />
    <path d="M5.500 13.500h4" stroke="#555" strokeWidth="1.500" />
    <circle cx="23" cy="8" r="6" fill="#f5e52c" stroke="#6d7040" />
    <circle cx="38" cy="6" r="4.500" fill="#8aa9c4" stroke="#6b87a1" />
    <path d="M38 1v10M33 6h10" stroke="#dbe7f2" />
    <path d="M40.500 7.500h6v7h-6z" fill="#eef3f8" stroke="#8093a5" />
    <path d="M52 8V4c0-3 5-3 5 0v3" stroke="#8c8f24" strokeWidth="1.500" />
    <path d="M55 7l8-1v7l-6 1.500-2-2z" fill="#d3d64a" stroke="#6b6e17" strokeWidth=".8" />
    <path d="M59 5V3c0-2 3-2 3 0v2" stroke="#8c8f24" />
    <path d="M67.500 3.500h9v9h-9z" fill="#fff" stroke="#000" />
  </svg>
);

const Drawing = () => (
  <svg viewBox="0 0 898 505" preserveAspectRatio="xMidYMid slice" className="block w-full h-full bg-black" role="img" aria-label="Sphere">
    <defs>
      <radialGradient id="light" gradientUnits="userSpaceOnUse" cx="235" cy="235" r="560">
        <stop offset="0" stopColor="#fff" />
        <stop offset=".4" stopColor="#fff" />
        <stop offset=".54" stopColor="#e6e6e6" />
        <stop offset=".7" stopColor="#b2b2b2" />
        <stop offset=".86" stopColor="#747474" />
        <stop offset="1" stopColor="#4a4a4a" />
      </radialGradient>
      <radialGradient id="rim" gradientUnits="userSpaceOnUse" cx="397" cy="390" r="350">
        <stop offset=".76" stopColor="#000" stopOpacity="0" />
        <stop offset="1" stopColor="#000" stopOpacity=".34" />
      </radialGradient>
      <path
        id="ball"
        d="M375 48L490 55 575 92 650 152 705 237 740 365 737 470 705 545 655 615 592 680 520 710 450 728 375 731 265 712 180 657 115 588 73 505 60 420 52 360 76 262 165 135 250 80z"
      />
    </defs>
    <g transform="translate(484 178) scale(.3333)">
      <use href="#ball" fill="url(#light)" />
      <path d="M432 125l75 5-15 65-60-5zM455 300l50-25 40 15-70 45zM240 470l60-22 60 24-55 30z" fill="#e6e1e4" opacity=".4" />
      <use href="#ball" fill="url(#rim)" />
    </g>
    <path d="M0 303.500L550 395M650 412L898 453M756 0L729 505" stroke="#fff" strokeWidth="1" />
    <path d="M550 395L650 412" stroke="#d0d0d0" strokeWidth="1" />
    {/* UCS tripod */}
    <path d="M40 464l2-27" stroke="#1ec81e" strokeWidth="2.500" />
    <path d="M42 428l5 14h-9z" fill="#2be02b" />
    <path d="M41 464l28 4" stroke="#f03030" strokeWidth="2.500" />
    <path d="M80 470l-16-6-1 8z" fill="#e81c1c" />
    <path d="M41 464l-6 7M35 462h8M40 469h6" stroke="#2a90e0" strokeWidth="1.500" />
    <path d="M29 479l1-9 7 4z" fill="#2a90e0" stroke="#2a90e0" />
    <path d="M45 417l4 4 4-4M49 421v5" stroke="#20c020" fill="none" />
    <path d="M77 454l8 8M85 454l-8 8" stroke="#d02020" />
  </svg>
);

const SheetTabs = () => (
  <div className="flex h-4 shrink-0">
    {[
      ['First', 'M4 3v8M11 3v8L6 7z'], ['Previous', 'M10 3v8L5 7z'],
      ['Next', 'M5 3v8l5-4z'], ['Last', 'M4 3v8l5-4zM11 3v8'],
    ].map(([label, d]) => (
      <button key={label} aria-label={label} className="w-[18px] h-4 border-r border-b border-[#aca899]">
        <svg viewBox="0 0 15 14" className="w-full h-full"><path d={d} fill="#000" stroke="#000" /></svg>
      </button>
    ))}
    <div className="relative ml-1 flex items-center text-[12px] leading-[14px]">
      <svg viewBox="0 0 88 16" className="absolute inset-0 w-[88px] h-4" fill="none">
        <path d="M40 0l5 13.500h34L85 0" fill="#efebde" stroke="#000" strokeWidth="1.300" />
        <path d="M0 0l6 14h30l6-14z" fill="#000" />
      </svg>
      <button className="relative w-[38px] text-center font-bold text-white">模型</button>
      <button className="relative w-[42px] text-center whitespace-nowrap"><Mixed text="布局1" /></button>
    </div>
    <div className="ml-auto w-[324px] flex items-center bg-[#f8f7f4] border-l border-white">
      <div className="w-1 h-full border-r border-[#aca899] bg-[#efebde]" />
      <ScrollButton label="Scroll left" d="M7 1L3 5l4 4" />
      <div className="w-4 h-[14px] rounded-sm border border-white bg-[#c3d3fd] flex justify-center items-center gap-px">
        <i className="w-px h-2 bg-[#8fa8e8]" /><i className="w-px h-2 bg-[#8fa8e8]" /><i className="w-px h-2 bg-[#8fa8e8]" /><i className="w-px h-2 bg-[#8fa8e8]" />
      </div>
    </div>
  </div>
);

const CommandWindow = () => {
  const [command, setCommand] = useState('');
  return (
    <section className="shrink-0 border-t-2 border-t-[#fbfaf6]">
      <div className="mt-1 border-t-2 border-t-[#222] flex h-[57px] pt-1">
        <div className="w-[17px]"><Grip /></div>
        <div className="flex-1 bg-white border-t-2 border-l border-[#222] border-b border-b-[#aca899]">
          <div className="pl-0.5 h-[30px] text-[14px] leading-[14px] border-b border-[#aca899]">
            <p>已完成实体校验。</p>
            <p>输入面编辑选项</p>
          </div>
          <label className="flex pl-0.5 text-[16px] leading-[19px]">
            <Mixed
              text="[拉伸(E)/移动(M)/旋转(R)/偏移(O)/倾斜(T)/删除(D)/复制(C)/着色(L)/放弃(U)/退出(X)] <退出>:"
              latin="text-[13px]"
            />
            <input
              value={command}
              onChange={(e) => setCommand(e.target.value)}
              className="flex-1 min-w-0 h-[18px] px-1 text-[13px] outline-none"
            />
          </label>
        </div>
      </div>
    </section>
  );
};

const Balloon = () => (
  <aside className="absolute right-1 bottom-[30px] w-[184px] h-[74px] rounded-[14px] border border-black bg-[#ffffe7] pl-[15px] pr-1.5 pt-[6px] text-[12px]">
    <div className="flex items-center h-[18px]">
      <svg viewBox="0 0 16 17" className="w-4 h-[17px] -ml-1.5" fill="none">
        <path d="M8 .5a7 7 0 0 1 2 13.500l-1 2.500-3-2.500A7 7 0 0 1 8 .5z" fill="#dce9f8" stroke="#8ba6c4" />
        <path d="M8 3v2M6.500 6.500H8V12M6 12h4" stroke="#1d55b8" strokeWidth="1.800" />
      </svg>
      <strong className="ml-2 text-[13px] leading-4">通信中心</strong>
      <button aria-label="Close" className="ml-auto mt-1 w-[15px] h-[15px] border border-[#c9c6b9] bg-[#efebde] flex items-center justify-center">
        <svg viewBox="0 0 8 8" className="w-2 h-2"><path d="M.5 .5l7 7M7.500 .5l-7 7" stroke="#000" strokeWidth="1.800" /></svg>
      </button>
    </div>
    <p className="mt-1 leading-4 whitespace-nowrap">使软件保持最新的简单方法。</p>
    <a href="#update" className="block mt-0.5 leading-4 text-[#0000ee] underline">单击此处。</a>
    <svg viewBox="0 0 42 20" className="absolute right-[20px] -bottom-[19px] w-[42px] h-5">
      <path d="M3 0l36 18.500L22 0z" fill="#ffffe7" />
      <path d="M2 .5l37 18L22 .5" fill="none" stroke="#000" strokeWidth="1.200" />
    </svg>
  </aside>
);

const StatusBar = () => (
  <footer className="relative flex items-center h-[23px] shrink-0 border-t border-t-[#8c897c] text-[12px] leading-5">
    <span className="pl-1.5 w-[91px] whitespace-nowrap"><Mixed text="英科宇机械CAD" /></span>
    <output className="w-[250px] h-5 pl-0.5 border border-[#c5c2b5]"><Mixed text="199.5000,  -217.0000, 0.0000" /></output>
    <div className="flex gap-1 ml-1">
      {toggles.map(([label, on]) => (
        <button
          key={label}
          aria-pressed={on}
          className={`px-px h-5 whitespace-nowrap border ${
            on ? 'border-t-black border-l-black border-r-white border-b-white bg-[#f5f3ea]' : 'border-t-white border-l-white border-r-[#aca899] border-b-[#aca899]'
          }`}
        >
          {label}
        </button>
      ))}
    </div>
    <div className="ml-auto flex items-center gap-2.5 pr-[3px]">
      <svg viewBox="0 0 20 18" className="w-5 h-[18px]" fill="none">
        <path d="M1 14L6 6M3 2c5 0 9 3 11 8" stroke="#5c7593" strokeWidth="3" />
        <path d="M2 15h7" stroke="#5c7593" strokeWidth="2" />
        <path d="M12 6l6 10H6z" fill="#f6dd35" stroke="#8a7410" strokeWidth=".8" />
        <path d="M12 9v4M12 14v1.500" stroke="#000" strokeWidth="1.500" />
      </svg>
      <svg viewBox="0 0 7 4" className="w-[7px] h-1"><path d="M0 0h7L3.500 4z" fill="#000" /></svg>
    </div>
    <Balloon />
  </footer>
);

const taskIcons = {
  folder: <><path d="M1 3h5l1 2h7v9H1z" fill="#e9b93c" stroke="#8a6412" strokeWidth=".7" /><path d="M4 3h8v8H4z" fill="#fff" /><path d="M3 14l3-7h10l-3 7z" fill="#f8d872" stroke="#8a6412" strokeWidth=".7" /></>,
  search: <><path d="M0 0h16v16H0z" fill="#173d8f" /><circle cx="8" cy="7" r="5.500" stroke="#fff" strokeWidth="1.500" /><circle cx="8" cy="7" r="2.300" stroke="#fff" strokeWidth="1.300" /><path d="M10 9l5 6M2 15l3-4" stroke="#fff" strokeWidth="1.500" /></>,
  note: <><path d="M2 2h10l2 12H3z" fill="#8fd0ea" stroke="#3e8db0" strokeWidth=".8" /><path d="M3 1v2M6 1v2M9 1v2M5 6h6M5 9h6" stroke="#eefaff" /></>,
  maxthon: <><circle cx="8" cy="8" r="7.200" fill="#2d6fd0" stroke="#e7f1fc" strokeWidth="1.500" /><path d="M5 12V6.500C5 5 8 5 8 7v4M8 7c0-2 3-2 3 0v5" stroke="#fff" strokeWidth="1.600" /></>,
  paint: <><path d="M4 8h7l-1 7H5z" fill="#c98a32" /><path d="M6 9L2 2M8 9V1M9 9l5-7" stroke="#e7c63a" strokeWidth="1.600" /><path d="M2 1l2 4M8 1v3M14 1l-2 4" stroke="#d43d2d" strokeWidth="1.800" /></>,
};

const tasks = [
  ['folder', 'Drawin...'], ['search', 'H:\\常...'], ['note', '新建 ...'],
  ['maxthon', '请教基...'], ['cad', '英科宇...'], ['paint', '4 - 画图'],
];

const Taskbar = () => (
  <div className="flex h-[29px] shrink-0 bg-gradient-to-b from-[#3f82ee] via-[#245edb] to-[#1e4fbd] text-white text-[12px]">
    <button className="w-24 mr-[11px] pl-2.5 flex items-center gap-2 rounded-r-lg bg-gradient-to-b from-[#5dae5a] via-[#37933a] to-[#2a7a2b] text-[18px] leading-[26px] italic">
      <svg viewBox="0 0 18 18" className="w-[18px] h-[18px]">
        <path d="M3 3c2-1.500 4-1 5.500 0L7 9C5 8 3.500 8 1.500 9z" fill="#f0582a" />
        <path d="M9.500 3.500c2 1 4 1 6.500 0L14.500 9.500c-2 1-4.500 1-6.500 0z" fill="#8fd13f" />
        <path d="M1.200 10c2-1 3.500-1 5.500 0L5.200 16c-2-1-3.500-1-5.200 0z" fill="#4f8df0" />
        <path d="M7.700 10.500c2 1 4 1 6.500 0L12.700 16.500c-2 1-4.500 1-6.500 0z" fill="#f8d43a" />
      </svg>
      开始
    </button>
    <div className="flex gap-px">
      {tasks.map(([icon, label]) => (
        <button
          key={icon}
          className={`w-[100px] h-[26px] mt-0.5 pl-2 flex items-center gap-1 rounded-[3px] border-t border-l ${
            icon === 'cad' ? 'bg-[#1b4cb8] border-[#153d96]' : 'bg-[#3c7cf0] border-[#5f97f8]'
          }`}
        >
          {icon === 'cad' ? <Logo /> : <svg viewBox="0 0 16 16" className="w-4 h-4" fill="none">{taskIcons[icon]}</svg>}
          <Mixed text={label} />
        </button>
      ))}
    </div>
    <div className="ml-3 flex items-center gap-[7px]">
      <svg viewBox="0 0 15 14" className="w-[15px] h-[14px]">
        <path d="M7 0v4" stroke="#fff" />
        <path d="M0 4h15v9H0z" fill="#111" stroke="#ddd" />
        <path d="M2 6.500h11M2 8.500h11M4 11h7" stroke="#fff" strokeDasharray="1.5 1" />
      </svg>
      <svg viewBox="0 0 14 14" className="w-[14px] h-[14px]" fill="none">
        <path d="M.5 .5h13v13H.5z" fill="#ffffe7" stroke="#000" />
        <path d="M4.500 5C4.500 2 9.500 2 9.500 5c0 2-2.500 2-2.500 4M7 10v2" stroke="#000" strokeWidth="1.500" />
      </svg>
      <svg viewBox="0 0 10 18" className="w-2.5 h-[18px] ml-1" fill="none">
        <path d="M3.500 3V1.500h6v4H7M1.500 3.500h5v4h-5z" stroke="#fff" />
        <path d="M2.500 14h5L5 17z" fill="#fff" />
      </svg>
    </div>
    <div className="ml-auto pr-3 flex items-center gap-[3px] bg-gradient-to-b from-[#2fb3f5] via-[#1290e8] to-[#0f7fd6] border-l border-[#0b3f9d]">
      <button aria-label="Show hidden icons" className="-ml-2">
        <svg viewBox="0 0 16 16" className="w-4 h-4" fill="none"><circle cx="8" cy="8" r="7.500" fill="#2f86e8" stroke="#8cc8f8" /><path d="M9.500 4.500L6 8l3.500 3.500" stroke="#fff" strokeWidth="1.800" /></svg>
      </button>
      <svg viewBox="0 0 16 16" className="w-4 h-4" fill="none">
        <path d="M0 0h16v16H0z" fill="#fff" />
        <path d="M15 1C7 2 2 7 3 10c2 3 7 2 12 5-3-4-9-3-9-6s4-4 9-8z" fill="#d81e1e" stroke="#d81e1e" />
      </svg>
      <svg viewBox="0 0 16 16" className="w-4 h-4" fill="none">
        <circle cx="7" cy="8" r="7" fill="#3f5f86" />
        <path d="M6 6c4-2 6-1 6 1v6M12 9c-6-1-6 4-3 4 2 0 3-1 3-3" stroke="#fff" strokeWidth="1.800" />
      </svg>
      <svg viewBox="0 0 14 16" className="w-3.5 h-4">
        <path d="M7 1l6 2c0 6-1 9-6 12C2 12 1 9 1 3z" fill="#cf2b30" stroke="#7c1014" />
        <path d="M4.500 5l5 5M9.500 5l-5 5" stroke="#fff" strokeWidth="1.700" />
      </svg>
      <time className="ml-1.5 text-[10px] leading-4">10:55</time>
    </div>
  </div>
);

const App = () => (
  <div className="flex flex-col h-screen overflow-hidden bg-[#efebde] text-black font-['Liberation_Mono','Noto_Sans_CJK_SC',monospace]">
    <TitleBar />
    <MenuBar />

    {/* Toolbars */}
    <div className="flex gap-0.5 shrink-0">
      <Bar><Tools items={rowOneMain} /></Bar>
      <Bar><Tools items={rowOneRender} /></Bar>
    </div>
    <div className="flex gap-0.5 shrink-0">
      <Bar>
        <Tools items={['Layer manager']} />
        <Combo label="Layer" value="0" width="w-[300px]"><LayerFlags /></Combo>
        <Tools items={['Make object layer current', 'Layer previous']} />
      </Bar>
      <Bar>
        <div className="flex gap-1">
          <Combo label="Color" value="随层" width="w-[150px]">
            <svg viewBox="0 0 11 11" className="w-[11px] h-[11px] ml-px"><path d="M.5 .5h10v10H.5z" fill="#fff" stroke="#000" /></svg>
          </Combo>
          <Combo label="Linetype" value="随层" width="w-[163px]">
            <svg viewBox="0 0 60 2" className="w-[60px] h-0.5"><path d="M0 .5h60" stroke="#000" /></svg>
          </Combo>
          <Combo label="Lineweight" value="随层" width="w-[127px]">
            <svg viewBox="0 0 35 2" className="w-[35px] h-0.5"><path d="M0 .5h35" stroke="#000" /></svg>
          </Combo>
          <Combo label="Plot style" value="随颜色" width="w-[122px]" />
        </div>
      </Bar>
    </div>
    <div className="flex gap-1 shrink-0">
      <Bar><Tools items={rowThreeLines} /></Bar>
      <Bar><div className="w-5" /><Tools items={rowThreeSolids} /></Bar>
    </div>

    <main className="flex flex-1 min-h-0">
      <div className="flex items-start w-[105px] shrink-0">
        {sideBars.map((items, i) => <SideBar key={i} items={items} />)}
      </div>
      <div className="flex flex-col flex-1 min-w-0 border-l border-t-2 border-[#716f64]">
        <div className="flex flex-1 min-h-0">
          <div className="flex-1 min-w-0"><Drawing /></div>
          <div className="w-[18px] mr-0.5 px-px flex flex-col items-center bg-[#fbfaf8]">
            <ScrollButton label="Scroll up" d="M1 7l4-4 4 4" />
            <div className="flex-[9]" />
            <div className="w-4 h-4 rounded-sm border border-white bg-[#c3d3fd] flex flex-col justify-center items-center gap-px">
              <i className="w-2 h-px bg-[#8fa8e8]" /><i className="w-2 h-px bg-[#8fa8e8]" /><i className="w-2 h-px bg-[#8fa8e8]" /><i className="w-2 h-px bg-[#8fa8e8]" />
            </div>
            <div className="flex-[10]" />
            <ScrollButton label="Scroll down" d="M1 3l4 4 4-4" />
          </div>
        </div>
        <SheetTabs />
      </div>
    </main>

    <CommandWindow />
    <StatusBar />
    <Taskbar />
  </div>
);

export default App;
